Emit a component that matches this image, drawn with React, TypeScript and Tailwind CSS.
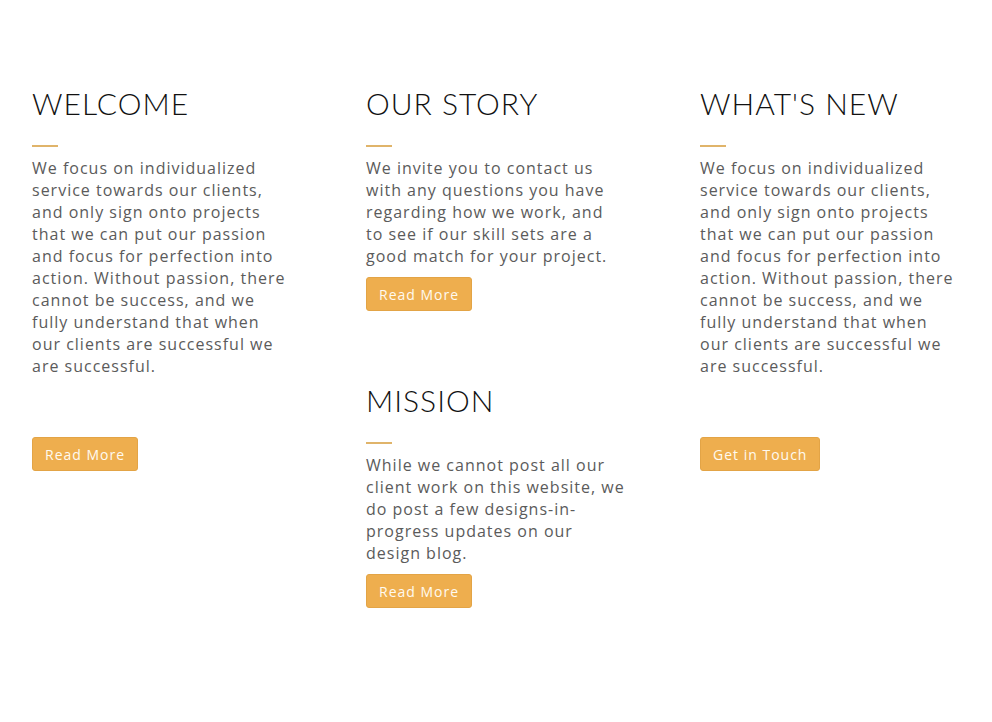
import React from 'react';

const body = 'font-["Open_Sans",sans-serif] text-[16px] leading-[22px] tracking-[1px] text-[#5b5b5b]';

const Heading: React.FC<{ children: React.ReactNode }> = ({ children }) => (
  <>
    <h2 className='font-["Lato",sans-serif] font-light text-[30px] leading-[36px] tracking-[1px] text-[#111]'>
      {children}
    </h2>
    <div className="mt-6 w-[26px] h-[2px] bg-[#e0b46a]" />
  </>
);

const Button: React.FC<{ children: React.ReactNode; className?: string }> = ({ children, className = '' }) => (
  <button
    className={`h-[34px] px-[12px] rounded-[3px] border border-[#e3a446] bg-[#eeae4e] text-[#fffaf0] font-["Open_Sans",sans-serif] text-[14px] tracking-[1px] ${className}`}
  >
    {children}
  </button>
);

const longText =
  'We focus on individualized service towards our clients, and only sign onto projects that we can put our passion and focus for perfection into action. Without passion, there cannot be success, and we fully understand that when our clients are successful we are successful.';

export default function App() {
  return (
    <div className="min-h-screen bg-white pl-8 pt-[85px]">
      <div className="grid grid-cols-[334px_334px_334px]">
        <div className="w-[260px]">
          <Heading>WELCOME</Heading>
          <p className={`mt-[10px] ${body}`}>{longText}</p>
          <Button className="mt-[60px]">Read More</Button>
        </div>

        <div className="w-[262px]">
          <Heading>OUR STORY</Heading>
          <p className={`mt-[10px] w-[256px] ${body}`}>
            We invite you to contact us with any questions you have regarding how we work, and to see if our skill sets are a good match for your project.
          </p>
          <Button className="mt-[10px]">Read More</Button>

          <div className="mt-[71px]">
            <Heading>MISSION</Heading>
            <p className={`mt-[10px] ${body}`}>
              While we cannot post all our client work on this website, we do post a few designs-in-progress updates on our design blog.
            </p>
            <Button className="mt-[10px]">Read More</Button>
          </div>
        </div>

        <div className="w-[260px]">
          <Heading>WHAT'S NEW</Heading>
          <p className={`mt-[10px] ${body}`}>{longText}</p>
          <Button className="mt-[60px]">Get in Touch</Button>
        </div>
      </div>
    </div>
  );
}
